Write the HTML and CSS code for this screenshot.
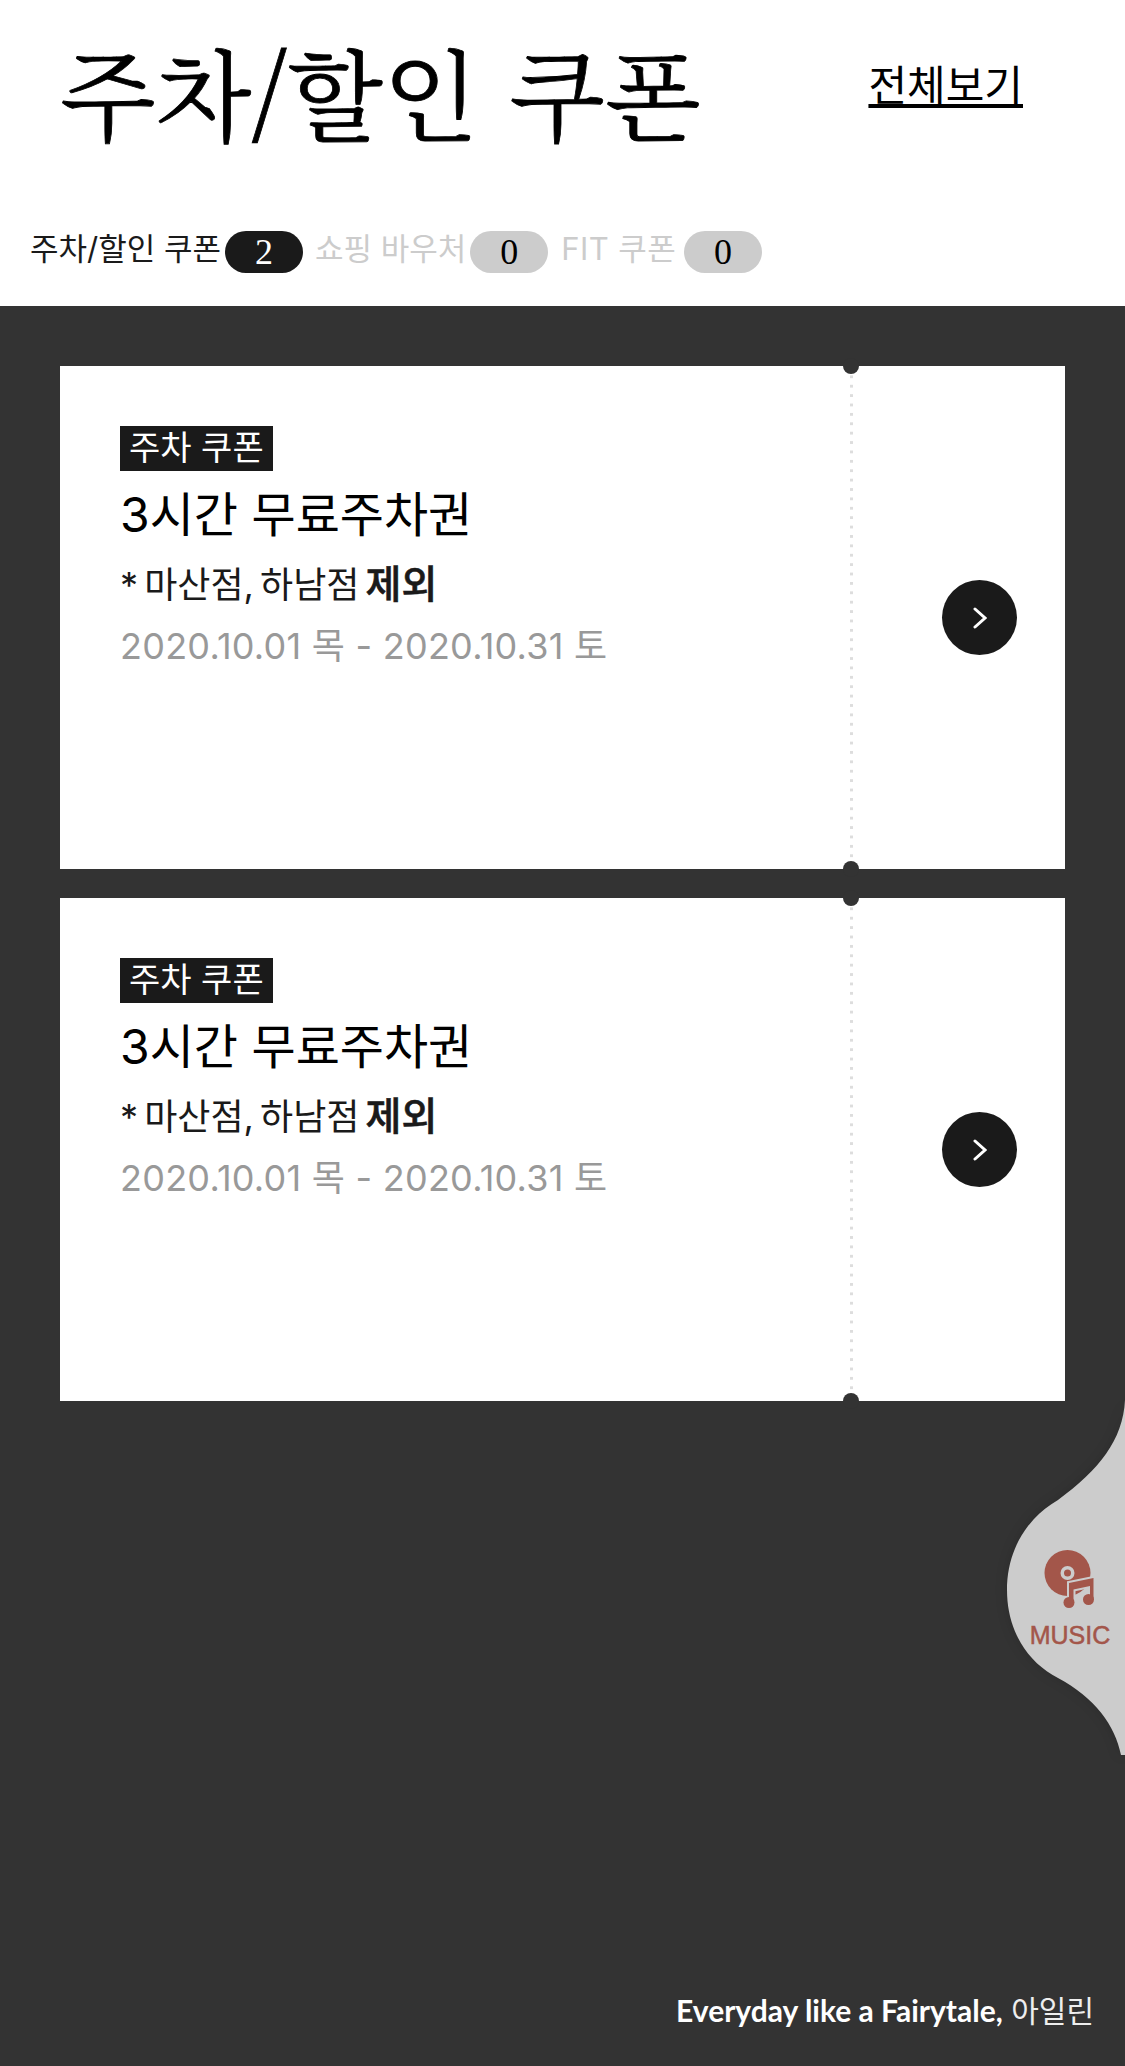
FILE: index.html
```html
<!DOCTYPE html>
<html lang="ko">
<head>
    <meta charset="UTF-8">
    <title>주차/할인 쿠폰</title>
    <link rel="stylesheet" href="styles.css">
</head>
<body>
    <header class="page-head">
        <div class="title-row">
            <h1 class="page-title">주차/할인 쿠폰</h1>
            <a class="view-all" href="#">전체보기</a>
        </div>
        <nav class="tabs">
            <a class="tab tab-active" href="#">주차/할인 쿠폰<span class="tab-count">2</span></a>
            <a class="tab" href="#">쇼핑 바우처<span class="tab-count">0</span></a>
            <a class="tab tab-fit" href="#">FIT 쿠폰<span class="tab-count">0</span></a>
        </nav>
    </header>

    <main class="coupon-list">
        <article class="coupon">
            <div class="coupon-body">
                <span class="coupon-tag">주차 쿠폰</span>
                <h2 class="coupon-name">3시간 무료주차권</h2>
                <p class="coupon-note">* 마산점, 하남점 <b>제외</b></p>
                <p class="coupon-date">2020.10.01 목 - 2020.10.31 토</p>
            </div>
            <div class="coupon-stub">
                <a class="coupon-go" href="#">
                    <svg width="14" height="22" viewBox="0 0 14 22"><path d="M2 2l10 9-10 9" fill="none" stroke="#fff" stroke-width="3" stroke-linecap="round" stroke-linejoin="miter"/></svg>
                </a>
            </div>
        </article>
        <article class="coupon">
            <div class="coupon-body">
                <span class="coupon-tag">주차 쿠폰</span>
                <h2 class="coupon-name">3시간 무료주차권</h2>
                <p class="coupon-note">* 마산점, 하남점 <b>제외</b></p>
                <p class="coupon-date">2020.10.01 목 - 2020.10.31 토</p>
            </div>
            <div class="coupon-stub">
                <a class="coupon-go" href="#">
                    <svg width="14" height="22" viewBox="0 0 14 22"><path d="M2 2l10 9-10 9" fill="none" stroke="#fff" stroke-width="3" stroke-linecap="round" stroke-linejoin="miter"/></svg>
                </a>
            </div>
        </article>
    </main>

    <a class="music" href="#">
        <svg class="music-shape" width="118" height="355" viewBox="0 0 118 355">
            <path d="M118 0C116 40 92 70 51 100C20 118 0 150 0 190C0 230 20 262 51 278C88 298 108 325 114 355H118Z" fill="#ccc"/>
        </svg>
        <svg class="music-icon" width="52" height="62" viewBox="0 0 52 62">
            <circle cx="23.500" cy="23" r="23" fill="#a3564a"/>
            <circle cx="23.500" cy="23" r="7" fill="#ccc"/>
            <circle cx="23.500" cy="23" r="3.500" fill="#a3564a"/>
            <path d="M25 33l24.500-5V50h-3.500V36l-16.500 3.500V52h-4.500Z" fill="#a3564a" stroke="#ccc" stroke-width="4" paint-order="stroke"/>
            <circle cx="25" cy="52.500" r="5.500" fill="#a3564a"/>
            <circle cx="44.500" cy="49.500" r="5.500" fill="#a3564a"/>
        </svg>
        <span class="music-label">MUSIC</span>
    </a>

    <footer class="page-foot">
        <b class="foot-slogan">Everyday like a Fairytale,</b> 아일린
    </footer>
</body>
</html>
```

FILE: styles.css
```css
body {
    margin: 0;
    min-height: 2066px;
    display: flex;
    flex-direction: column;
    position: relative;
    overflow-x: hidden;
    font-family: "Inter", "Noto Sans CJK KR", sans-serif;
    background-color: #333;
}

a {
    color: inherit;
    text-decoration: none;
}

.page-head {
    height: 306px;
    box-sizing: border-box;
    background-color: #fff;
    color: #000;
}

.title-row {
    height: 192px;
    padding: 0 102px 0 60px;
    display: flex;
    align-items: center;
    justify-content: space-between;
}

.page-title {
    margin: 0 0 11px;
    font-family: "Noto Serif CJK KR", serif;
    font-size: 99px;
    font-weight: 400;
    line-height: 1;
    white-space: nowrap;
    -webkit-text-stroke: 0.8px #000;
}

.view-all {
    margin-bottom: 20px;
    font-size: 42px;
    line-height: 1.2;
    text-decoration: underline;
}

.tabs {
    margin-top: 39px;
    padding-left: 30px;
    display: flex;
    gap: 12px;
}

.tab {
    display: flex;
    align-items: flex-start;
    height: 42px;
    gap: 4px;
    font-size: 31px;
    line-height: 36px;
    color: #ccc;
    white-space: nowrap;
}

.tab-fit {
    gap: 8px;
    margin-left: 1px;
    letter-spacing: 0.4px;
}

.tab-active {
    color: #1a1a1a;
}

.tab-count {
    width: 78px;
    height: 42px;
    border-radius: 21px;
    font-family: "Liberation Serif", serif;
    font-size: 36px;
    line-height: 42px;
    text-align: center;
    color: #000;
    background-color: #ccc;
}

.tab-active .tab-count {
    color: #fff;
    background-color: #1a1a1a;
}

.coupon-list {
    flex: 1;
    padding: 60px 60px 0;
    display: flex;
    flex-direction: column;
    gap: 29px;
}

.coupon {
    height: 503px;
    display: flex;
    background-color: #fff;
}

.coupon-body {
    flex: 1;
    padding: 60px 0 0 60px;
    color: #1a1a1a;
}

.coupon-tag {
    display: block;
    width: fit-content;
    height: 45px;
    padding: 0 9px;
    font-size: 34px;
    line-height: 44px;
    color: #fff;
    background-color: #1a1a1a;
}

.coupon-name {
    margin: 14px 0 0;
    font-size: 48px;
    font-weight: 400;
    line-height: 60px;
    color: #000;
}

.coupon-note {
    margin: 12px 0 0;
    font-size: 36px;
    line-height: 54px;
    word-spacing: -4px;
}

.coupon-note b {
    font-size: 39px;
    font-weight: 500;
    -webkit-text-stroke: 0.6px #1a1a1a;
}

.coupon-date {
    margin: 7px 0 0;
    font-size: 36px;
    line-height: 54px;
    letter-spacing: 0.25px;
    color: #999;
}

.coupon-stub {
    position: relative;
    width: 215px;
    padding-left: 44px;
    box-sizing: border-box;
    display: flex;
    align-items: center;
    justify-content: center;
    background: linear-gradient(#ddd 3px, transparent 3px) left 0 top 0 / 3px 9.4px repeat-y;
}

.coupon-stub::before,
.coupon-stub::after {
    content: "";
    position: absolute;
    left: -7px;
    width: 16px;
    height: 16px;
    border-radius: 50%;
    background-color: #333;
}

.coupon-stub::before {
    top: -8px;
}

.coupon-stub::after {
    bottom: -8px;
}

.coupon-go {
    width: 75px;
    height: 75px;
    border-radius: 50%;
    display: flex;
    align-items: center;
    justify-content: center;
    background-color: #1a1a1a;
}

.music {
    position: absolute;
    top: 1400px;
    right: 0;
    width: 118px;
    height: 355px;
    padding-top: 150px;
    box-sizing: border-box;
    display: flex;
    flex-direction: column;
    align-items: center;
    color: #a3564a;
}

.music-shape {
    position: absolute;
    top: 0;
    left: 0;
    filter: drop-shadow(0 0 6px rgba(0, 0, 0, 0.15));
}

.music-icon {
    position: relative;
    margin-left: 8px;
}

.music-label {
    position: relative;
    margin: 9px 0 0 8px;
    font-family: "Liberation Sans", sans-serif;
    font-size: 25px;
    line-height: 28px;
    -webkit-text-stroke: 0.5px #a3564a;
}

.page-foot {
    padding: 0 31px 34px 0;
    font-size: 30px;
    line-height: 42px;
    text-align: right;
    color: #eee;
}

.foot-slogan {
    font-family: "Lato", sans-serif;
    font-weight: 700;
    color: #fff;
}
```
